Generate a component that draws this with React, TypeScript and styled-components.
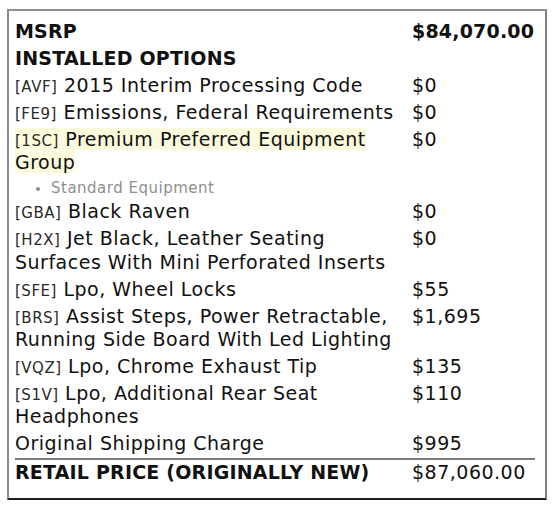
import React from "react";
import styled, { createGlobalStyle } from "styled-components";

const Global = createGlobalStyle`
  html, body { margin: 0; padding: 0; background: #fff; }
  body { font-family: "DejaVu Sans", "Liberation Sans", sans-serif; color: #111; }
`;

const Page = styled.div`
  padding: 9px 9px 11px 7px;
`;

const Box = styled.div`
  width: 540px;
  box-sizing: border-box;
  border-style: solid;
  border-width: 2px;
  border-color: #909090 #808080 #1e1e1e #8c8c8c;
  padding: 9px 10px 13px 6px;
`;

const Grid = styled.div`
  display: grid;
  grid-template-columns: 397px 1fr;
  font-size: 19px;
  letter-spacing: 0.5px;
  line-height: 23.5px;
`;

const Cell = styled.div<{ $bold?: boolean; $total?: boolean; $first?: boolean }>`
  padding-top: ${(p) => (p.$first ? 0 : p.$total ? 1.5 : 3.45)}px;
  padding-right: 8px;
  font-weight: ${(p) => (p.$bold ? 700 : 400)};
  letter-spacing: ${(p) => (p.$bold ? "0.2px" : "inherit")};
  ${(p) => (p.$total ? "border-top: 2px solid #7a7a7a; margin-top: 2px;" : "")}
`;

const Price = styled(Cell)`
  padding-right: 0;
  white-space: nowrap;
`;

const Full = styled.div`
  grid-column: 1 / span 2;
  font-weight: 700;
  letter-spacing: 0.2px;
  padding-top: 3.45px;
`;

const Code = styled.span`
  font-size: 15px;
  line-height: 0;
  color: #2a2a2a;
`;

const Mark = styled.span`
  background: #fcfadc;
`;

const SubList = styled.ul`
  grid-column: 1 / span 2;
  margin: 0;
  padding: 5px 0 0 36px;
  font-size: 15px;
  line-height: 17px;
  letter-spacing: 0.5px;
  color: #8e8e8e;
  list-style: disc;
  li::marker { font-size: 13px; }
`;

type Item = { code: string; name: string; price: string; mark?: boolean; sub?: string[] };

const items: Item[] = [
  { code: "AVF", name: "2015 Interim Processing Code", price: "$0" },
  { code: "FE9", name: "Emissions, Federal Requirements", price: "$0" },
  { code: "1SC", name: "Premium Preferred Equipment Group", price: "$0", mark: true, sub: ["Standard Equipment"] },
  { code: "GBA", name: "Black Raven", price: "$0" },
  { code: "H2X", name: "Jet Black, Leather Seating Surfaces With Mini Perforated Inserts", price: "$0" },
  { code: "SFE", name: "Lpo, Wheel Locks", price: "$55" },
  { code: "BRS", name: "Assist Steps, Power Retractable, Running Side Board With Led Lighting", price: "$1,695" },
  { code: "VQZ", name: "Lpo, Chrome Exhaust Tip", price: "$135" },
  { code: "S1V", name: "Lpo, Additional Rear Seat Headphones", price: "$110" },
];

export default function App() {
  return (
    <Page>
      <Global />
      <Box>
        <Grid>
          <Cell $bold $first>MSRP</Cell>
          <Price $bold $first>$84,070.00</Price>
          <Full>INSTALLED OPTIONS</Full>
          {items.map((it) => {
            const content = (
              <>
                <Code>[{it.code}]</Code> {it.name}
              </>
            );
            return (
              <React.Fragment key={it.code}>
                <Cell>{it.mark ? <Mark>{content}</Mark> : content}</Cell>
                <Price>{it.price}</Price>
                {it.sub && (
                  <SubList>
                    {it.sub.map((s) => (
                      <li key={s}>{s}</li>
                    ))}
                  </SubList>
                )}
              </React.Fragment>
            );
          })}
          <Cell>Original Shipping Charge</Cell>
          <Price>$995</Price>
          <Cell $bold $total>RETAIL PRICE (ORIGINALLY NEW)</Cell>
          <Price $total>$87,060.00</Price>
        </Grid>
      </Box>
    </Page>
  );
}
